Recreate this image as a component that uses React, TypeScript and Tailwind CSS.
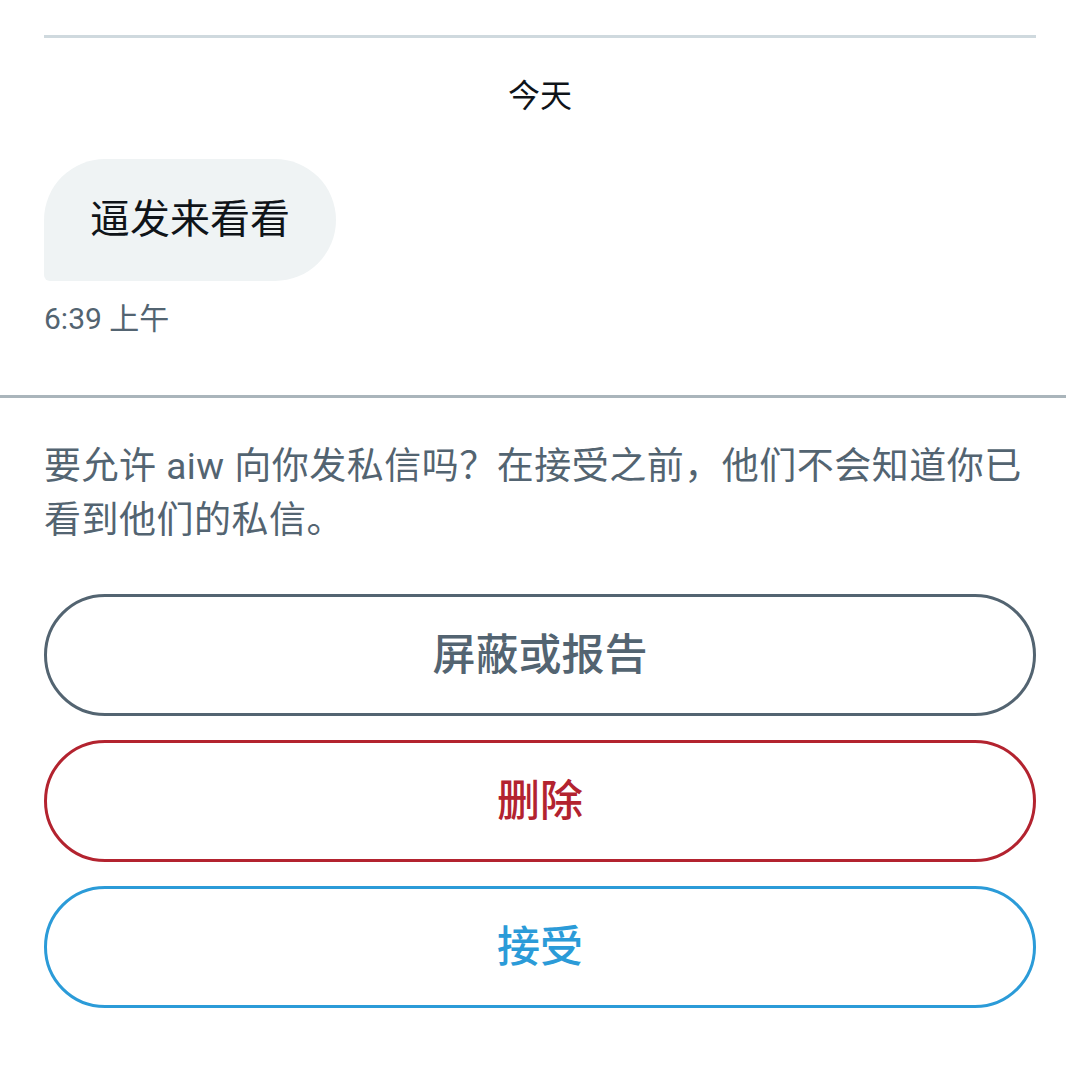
const font = { fontFamily: '"Roboto", "Noto Sans CJK SC", sans-serif' }

function ActionButton({ label, tone }: { label: string; tone: 'gray' | 'red' | 'blue' }) {
  const tones = {
    gray: 'border-[#536471] text-[#536471]',
    red: 'border-[#b3232f] text-[#b3232f]',
    blue: 'border-[#2b9bd8] text-[#2b9bd8]',
  }
  return (
    <button
      className={`flex h-[122px] w-full items-center justify-center rounded-full border-[3px] bg-white text-[43px] font-medium ${tones[tone]}`}
    >
      {label}
    </button>
  )
}

export default function App() {
  return (
    <div className="min-h-[1075px] w-[1066px] bg-white" style={font}>
      <div className="pl-[44px] pr-[30px] pt-[35px]">
        <div className="h-[3px] bg-[#cfd9de]" />
        <div className="pt-[38px] text-center text-[32px] leading-[40px] text-[#0f1419]">今天</div>
        <div className="mt-[43px] flex">
          <div className="flex h-[122px] items-center rounded-[61px] rounded-bl-[6px] bg-[#eff3f4] px-[46px] text-[40px] text-[#0f1419]">
            逼发来看看
          </div>
        </div>
        <div className="mt-[20px] text-[30px] leading-[36px] text-[#536471]">6:39 上午</div>
      </div>

      <div className="mt-[58px] h-[3px] bg-[#aab5bb]" />

      <div className="pl-[44px] pr-[30px]">
        <p className="mt-[42px] text-[37px] leading-[54px] tracking-[0.5px] text-[#536471]">
          要允许 aiw 向你发私信吗？在接受之前，他们不会知道你已看到他们的私信。
        </p>
        <div className="mt-[46px] flex flex-col gap-[24px]">
          <ActionButton label="屏蔽或报告" tone="gray" />
          <ActionButton label="删除" tone="red" />
          <ActionButton label="接受" tone="blue" />
        </div>
      </div>
    </div>
  )
}
